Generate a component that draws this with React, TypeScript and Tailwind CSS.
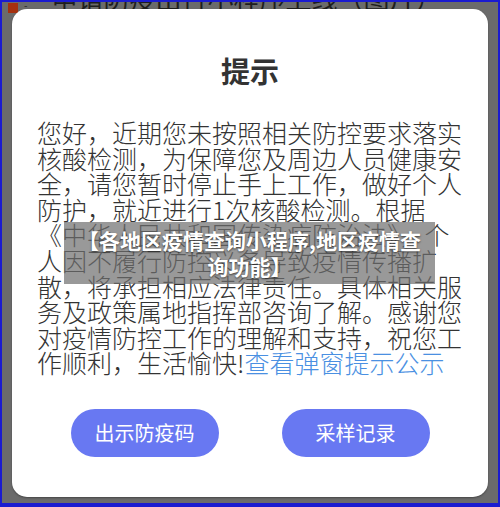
import React from 'react';

const bodyFont = { fontFamily: '"Noto Sans CJK SC", "Noto Sans", sans-serif' };

const App: React.FC = () => {
  return (
    <div
      className="relative w-[500px] h-[507px] overflow-hidden bg-[#6b6b6b] border-t-2 border-x-2 border-b-4 border-[#1b1bd0] flex flex-col"
      style={bodyFont}
    >
      {/* page behind the dialog */}
      <div className="h-[7px] flex items-start shrink-0">
        <div className="ml-[6px] mt-[1px] w-[10px] h-[10px] bg-[#a5300f]" />
        <div className="ml-[6px] -mt-[2px] text-[10px] leading-none text-[#222]">-</div>
        <div className="ml-[24px] -mt-[17px] text-[26px] leading-[26px] text-[#1e1e1e] whitespace-nowrap">
          申请防疫出行小程序上线（图片）
        </div>
      </div>

      {/* dialog */}
      <div className="relative mx-[10px] h-[488px] bg-white rounded-[15px] shadow-[0_1px_2px_rgba(0,0,0,0.35)] flex flex-col px-[25px] pt-[43px]">
        <h2 className="text-center text-[29px] leading-[36px] font-bold text-[#333]">提示</h2>

        <p className="mt-[32px] text-[25px] leading-[25.6px] font-light text-[#333]">
          您好，近期您未按照相关防控要求落实核酸检测，为保障您及周边人员健康安全，请您暂时停止手上工作，做好个人防护，就近进行1次核酸检测。根据《中华人民共和国传染病防治法》，个人因不履行防控义务导致疫情传播扩散，将承担相应法律责任。具体相关服务及政策属地指挥部咨询了解。感谢您对疫情防控工作的理解和支持，祝您工作顺利，生活愉快!
          <span className="text-[#4a90e2]">查看弹窗提示公示</span>
        </p>

        <div className="mt-[33px] flex justify-center gap-[63px]">
          <button className="w-[148px] h-[48px] rounded-full bg-[#6878f2] text-white text-[20px]">
            出示防疫码
          </button>
          <button className="w-[148px] h-[48px] rounded-full bg-[#6878f2] text-white text-[20px]">
            采样记录
          </button>
        </div>
      </div>

      {/* caption laid over the picture */}
      <div className="absolute left-[62px] top-[220px] w-[371px] px-[8px] py-[5px] bg-[rgba(110,110,110,0.7)] text-center text-white font-bold text-[21px] leading-[26px] [text-shadow:0_1px_2px_rgba(0,0,0,0.6)]">
        【各地区疫情查询小程序,地区疫情查询功能】
      </div>
    </div>
  );
};

export default App;
